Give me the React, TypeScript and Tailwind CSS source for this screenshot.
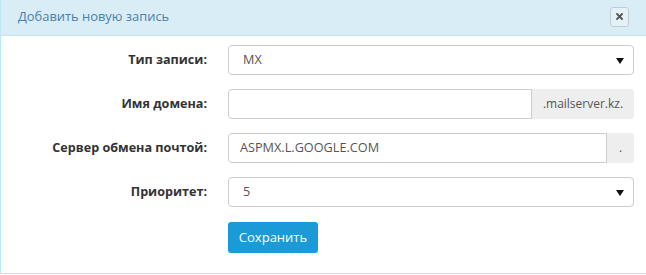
import React from "react";

const font = { fontFamily: '"Open Sans", "Noto Sans", sans-serif' };

function Arrow() {
  return (
    <svg width="8" height="7" viewBox="0 0 8 7" className="absolute right-[9px] top-[12px]">
      <path d="M0 0 H8 L4 6 Z" fill="#111" />
    </svg>
  );
}

function Label({ children }: { children: React.ReactNode }) {
  return (
    <div className="w-[206px] shrink-0 text-right text-[12.6px] font-bold text-[#333]">
      {children}
    </div>
  );
}

export default function App() {
  return (
    <div className="w-[646px] h-[274px] bg-white border-l border-b border-[#bce8f1] box-border" style={font}>
      <div className="h-[36px] bg-[#d9edf7] border-b border-[#bce8f1] flex items-center justify-between pl-[17px] pr-[17px]">
        <span className="text-[12.9px] text-[#4b80a8] leading-none -mt-[2px]">Добавить новую запись</span>
        <button className="w-[19px] h-[20px] border border-[#c3cdd3] rounded-[3px] bg-[#e4f1f8] flex items-center justify-center -mt-[2px]">
          <svg width="7" height="7" viewBox="0 0 7 7">
            <path d="M1 1 L6 6 M6 1 L1 6" stroke="#555" strokeWidth="1.9" strokeLinecap="square" />
          </svg>
        </button>
      </div>
      <div className="pt-[9px] flex flex-col gap-[14px]">
        <div className="flex items-center">
          <Label>Тип записи:</Label>
          <div className="ml-[21px] w-[406px] h-[30px] relative border border-[#ccc] rounded-[4px] flex items-center pl-[14px] text-[12.7px] text-[#555]">
            MX
            <Arrow />
          </div>
        </div>
        <div className="flex items-center">
          <Label>Имя домена:</Label>
          <div className="ml-[21px] w-[406px] h-[30px] flex">
            <div className="flex-1 border border-[#ccc] rounded-l-[4px]" />
            <div className="w-[102px] bg-[#eee] rounded-r-[4px] flex items-center justify-center text-[12px] text-[#555]">
              .mailserver.kz.
            </div>
          </div>
        </div>
        <div className="flex items-center">
          <Label>Сервер обмена почтой:</Label>
          <div className="ml-[21px] w-[406px] h-[30px] flex">
            <div className="flex-1 border border-[#ccc] rounded-l-[4px] flex items-center pl-[11px] text-[12.7px] text-[#555]">
              ASPMX.L.GOOGLE.COM
            </div>
            <div className="w-[27px] bg-[#eee] rounded-r-[4px] flex items-center justify-center text-[12px] text-[#555]">
              .
            </div>
          </div>
        </div>
        <div className="flex items-center">
          <Label>Приоритет:</Label>
          <div className="ml-[21px] w-[406px] h-[30px] relative border border-[#ccc] rounded-[4px] flex items-center pl-[14px] text-[12.7px] text-[#555]">
            5
            <Arrow />
          </div>
        </div>
        <div className="flex">
          <div className="w-[206px] shrink-0" />
          <button className="ml-[21px] mt-[1px] w-[90px] h-[31px] rounded-[3px] bg-[#1a9ad6] text-white text-[13px] flex items-center justify-center">
            Сохранить
          </button>
        </div>
      </div>
    </div>
  );
}
